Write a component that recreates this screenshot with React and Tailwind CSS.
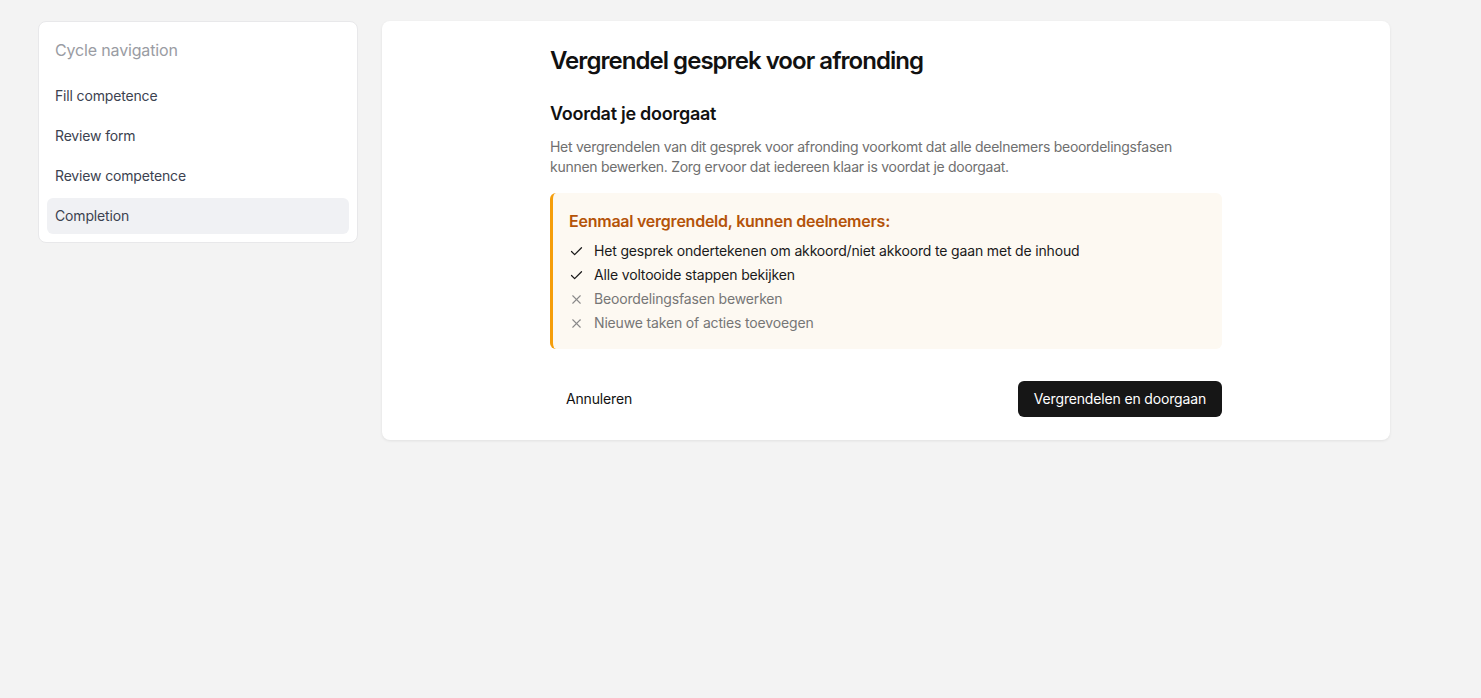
import { Check, X } from "lucide-react";

const navItems = [
    { label: "Fill competence" },
    { label: "Review form" },
    { label: "Review competence" },
    { label: "Completion", active: true },
];

const permissions = [
    { text: "Het gesprek ondertekenen om akkoord/niet akkoord te gaan met de inhoud", allowed: true },
    { text: "Alle voltooide stappen bekijken", allowed: true },
    { text: "Beoordelingsfasen bewerken", allowed: false },
    { text: "Nieuwe taken of acties toevoegen", allowed: false },
];

export default function App() {
    return (
        <div className="min-h-screen bg-[#f3f3f3] pl-[38px] pt-[21px] font-['Inter',sans-serif] tracking-[-0.01em]">
            <div className="flex items-start gap-6">
                {/* Sidebar */}
                <aside className="w-80 bg-white border border-[#e8e8ea] rounded-lg">
                    <div className="px-4 pt-4 pb-2 text-base text-[#9a9ca3]">Cycle navigation</div>
                    <nav className="p-2 space-y-1">
                        {navItems.map(item => (
                            <div
                                key={item.label}
                                className={`h-9 flex items-center px-2 rounded-md text-sm text-[#3c4250] ${item.active ? "bg-[#f0f1f4]" : ""}`}
                            >
                                {item.label}
                            </div>
                        ))}
                    </nav>
                </aside>

                {/* Lock dialog */}
                <main className="w-[1008px] bg-white rounded-lg shadow-[0_1px_3px_rgba(0,0,0,0.08)] pt-6 pb-[23px]">
                    <div className="max-w-2xl mx-auto">
                        <h1 className="text-2xl font-semibold text-[#111111] tracking-[-0.04em]">Vergrendel gesprek voor afronding</h1>

                        <h2 className="mt-[23px] text-lg font-semibold text-[#111111] tracking-[-0.015em]">Voordat je doorgaat</h2>
                        <p className="mt-[9px] text-sm leading-5 text-[#6f6f6f] tracking-[-0.02em]">
                            Het vergrendelen van dit gesprek voor afronding voorkomt dat alle deelnemers beoordelingsfasen
                            kunnen bewerken. Zorg ervoor dat iedereen klaar is voordat je doorgaat.
                        </p>

                        <div className="mt-4 bg-[#fdf9f2] border-l-[3px] border-[#f59e0b] rounded-md px-4 pt-4 pb-[14px]">
                            <div className="text-base font-semibold text-[#b45309] tracking-[-0.015em]">Eenmaal vergrendeld, kunnen deelnemers:</div>
                            <ul className="mt-[6px]">
                                {permissions.map(p => (
                                    <li key={p.text} className={`flex items-center gap-2.5 h-6 text-sm ${p.allowed ? "text-[#1a1a1a]" : "text-[#767676]"}`}>
                                        {p.allowed ? (
                                            <Check size={15} strokeWidth={2} className="text-[#1a1a1a] shrink-0" />
                                        ) : (
                                            <X size={15} strokeWidth={1.75} className="text-[#8a8a8a] shrink-0" />
                                        )}
                                        {p.text}
                                    </li>
                                ))}
                            </ul>
                        </div>

                        <div className="mt-8 flex items-center justify-between">
                            <button className="h-9 px-4 rounded-md text-sm text-[#111111]">Annuleren</button>
                            <button className="h-9 px-4 rounded-md bg-[#161616] text-sm text-white">Vergrendelen en doorgaan</button>
                        </div>
                    </div>
                </main>
            </div>
        </div>
    );
}
